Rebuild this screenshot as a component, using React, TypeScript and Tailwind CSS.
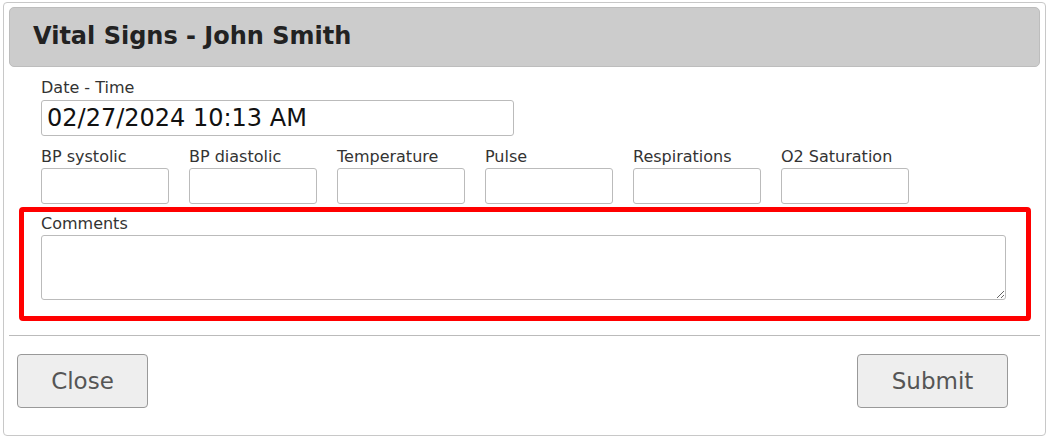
const FIELDS = [
  "BP systolic",
  "BP diastolic",
  "Temperature",
  "Pulse",
  "Respirations",
  "O2 Saturation",
];

export default function App() {
  return (
    <div className="w-[1048px] h-[440px] bg-white font-['DejaVu_Sans',Verdana,sans-serif] text-[#333]">
      <div className="ml-[3px] pt-[2px]">
        <div className="w-[1043px] h-[434px] border border-[#c8c8c8] rounded-[4px] px-[5px] pt-[4px]">
          {/* header */}
          <div className="h-[60px] bg-[#cccccc] border border-[#bdbdbd] rounded-[5px] flex items-center pl-[23px]">
            <h1 className="text-[24px] font-bold text-[#222] leading-none pb-[2px]">
              Vital Signs - John Smith
            </h1>
          </div>

          <div className="pl-[32px] pt-[11px]">
            <label className="block text-[16px] leading-[20px]">Date - Time</label>
            <input
              className="mt-[2px] w-[473px] h-[36px] border border-[#bbb] rounded-[3px] px-[5px] text-[24px] text-[#111] outline-none"
              defaultValue="02/27/2024 10:13 AM"
            />
            <div className="flex gap-[20px] mt-[11px]">
              {FIELDS.map((f) => (
                <div key={f} className="flex flex-col">
                  <label className="text-[16px] leading-[20px] whitespace-nowrap">{f}</label>
                  <input className="mt-[1px] w-[128px] h-[36px] border border-[#bbb] rounded-[3px] outline-none" />
                </div>
              ))}
            </div>
          </div>

          {/* comments */}
          <div className="ml-[10px] mr-[9px] mt-[3px] h-[114px] border-[5px] border-[#ff0000] rounded-[4px] pl-[17px] pr-[20px] pt-[2px]">
            <label className="block text-[16px] leading-[20px]">Comments</label>
            <textarea className="block mt-[1px] w-full h-[65px] border border-[#bbb] rounded-[3px] outline-none" />
          </div>

          <div className="mt-[14px] border-t border-[#bbb]" />

          <div className="flex justify-between pl-[8px] pr-[32px] mt-[18px]">
            <button className="w-[131px] h-[54px] bg-[#eeeeee] border border-[#999] rounded-[4px] text-[23px] text-[#555]">
              Close
            </button>
            <button className="w-[151px] h-[54px] bg-[#eeeeee] border border-[#999] rounded-[4px] text-[23px] text-[#555]">
              Submit
            </button>
          </div>
        </div>
      </div>
    </div>
  );
}
